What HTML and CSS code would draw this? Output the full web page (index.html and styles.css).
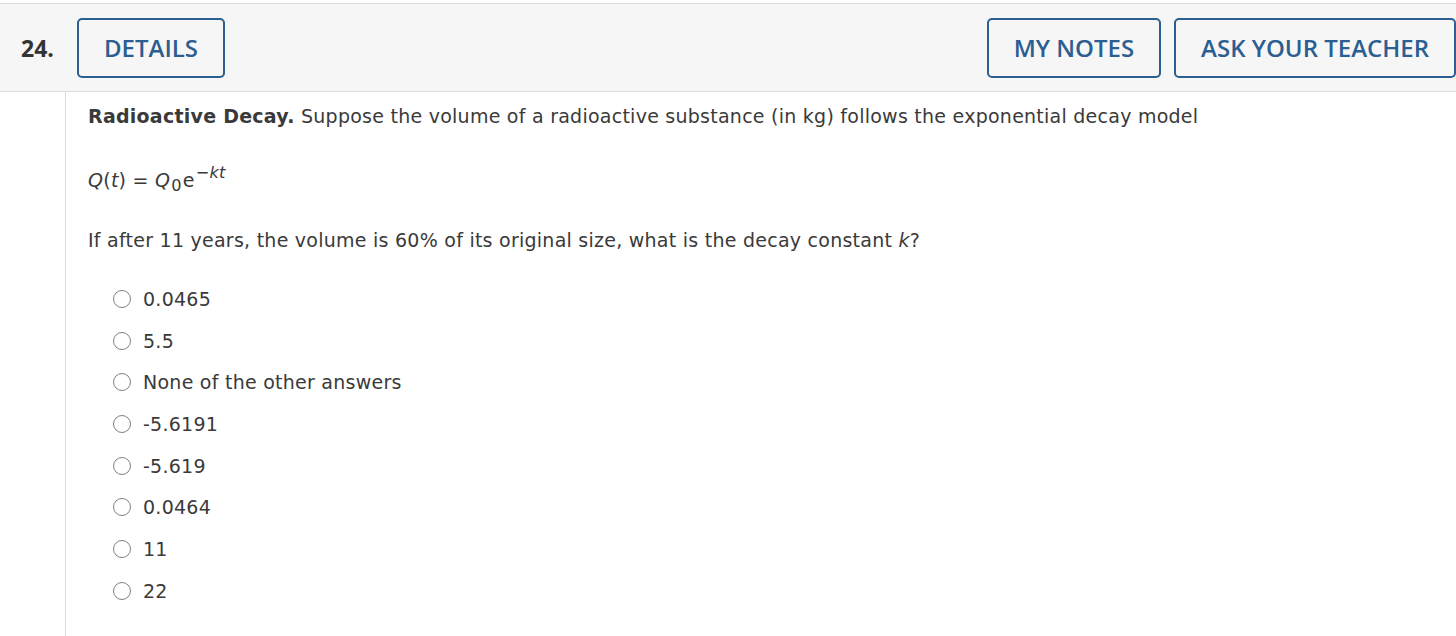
FILE: index.html
```html
<!DOCTYPE html>
<html>
<head>
<meta charset="utf-8">
<link rel="stylesheet" href="styles.css">
</head>
<body>
<div class="question">
  <div class="qhead">
    <div class="qnum">24.</div>
    <button class="btn">DETAILS</button>
    <div class="spacer"></div>
    <button class="btn">MY NOTES</button>
    <button class="btn">ASK YOUR TEACHER</button>
  </div>
  <div class="qbody">
    <div class="gutter"></div>
    <div class="content">
      <p class="line intro"><b>Radioactive Decay.</b> Suppose the volume of a radioactive substance (in kg) follows the exponential decay model</p>
      <p class="line eq"><i>Q</i>(<i>t</i>) = <i>Q</i><sub>0</sub><span class="e">e</span><sup>&minus;<i>kt</i></sup></p>
      <p class="line ask">If after 11 years, the volume is 60% of its original size, what is the decay constant <i>k</i>?</p>
      <ul class="options">
        <li><span class="radio"></span>0.0465</li>
        <li><span class="radio"></span>5.5</li>
        <li><span class="radio"></span>None of the other answers</li>
        <li><span class="radio"></span>-5.6191</li>
        <li><span class="radio"></span>-5.619</li>
        <li><span class="radio"></span>0.0464</li>
        <li><span class="radio"></span>11</li>
        <li><span class="radio"></span>22</li>
      </ul>
    </div>
  </div>
</div>
</body>
</html>
```
FILE: styles.css
```css
html, body {
  margin: 0;
  padding: 0;
  background: #fff;
  height: 100%;
  overflow: hidden;
}
.question {
  padding-top: 3px;
}
.qhead {
  display: flex;
  align-items: center;
  height: 87px;
  background: #f6f6f6;
  border-top: 1px solid #dcdcdc;
  border-bottom: 1px solid #dcdcdc;
}
.qnum {
  font-family: "Open Sans", sans-serif;
  font-weight: 700;
  font-size: 23px;
  color: #333;
  padding-left: 21px;
  width: 55px;
  box-sizing: border-box;
}
.spacer { flex: 1; }
.btn {
  font-family: "Open Sans", sans-serif;
  font-weight: 600;
  font-size: 24px;
  color: #2b5e91;
  background: transparent;
  border: 2.5px solid #2b5e91;
  border-radius: 5px;
  height: 60px;
  padding: 0 25px;
  margin: 0 0 0 13px;
  box-sizing: border-box;
}
.qhead .btn:nth-child(2) { margin-left: 22px; }
.qbody {
  display: flex;
  height: 560px;
}
.gutter {
  width: 65px;
  border-right: 1px solid #dcdcdc;
  flex: none;
}
.content {
  padding: 12px 0 0 22px;
  font-family: "DejaVu Sans", Verdana, sans-serif;
  font-size: 19px;
  letter-spacing: 0.25px;
  color: #3a3a3a;
}
.line {
  margin: 0;
  line-height: 24px;
}
.eq { margin-top: 40px; }
.ask { margin-top: 36px; }
.line b { font-weight: 700; }
.eq sub {
  font-size: 0.85em;
  vertical-align: -4px;
  line-height: 0;
  margin-left: 1px;
}
.eq .e { margin-left: 1px; }
.eq sup {
  font-size: 0.85em;
  vertical-align: 9px;
  line-height: 0;
  margin-left: 1px;
}
.options {
  list-style: none;
  margin: 0;
  padding: 26px 0 0 25px;
}
.options li {
  display: flex;
  align-items: center;
  height: 41.7px;
}
.radio {
  width: 16px;
  height: 16px;
  border: 1.5px solid #808080;
  border-radius: 50%;
  margin-right: 12px;
  flex: none;
  box-sizing: content-box;
}
```
